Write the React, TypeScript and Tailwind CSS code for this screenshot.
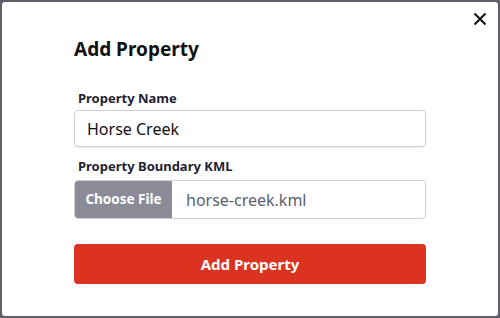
import React from "react";

export default function App() {
  return (
    <div className="w-[500px] h-[318px] bg-[#605f69] p-[2px] font-['Noto_Sans',sans-serif]">
      <div className="relative h-full bg-white rounded-[3px] pl-[72px] pr-[72px] pt-[35px]">
        <button className="absolute top-[9px] right-[10px] w-[16px] h-[16px] flex items-center justify-center">
          <svg width="14" height="14" viewBox="0 0 14 14" fill="none">
            <path d="M1.5 1.5L12.5 12.5M12.5 1.5L1.5 12.5" stroke="#111" strokeWidth="2" />
          </svg>
        </button>

        <h2 className="text-[19px] leading-[24px] font-bold text-[#111]">Add Property</h2>

        <label className="block mt-[29px] ml-[4px] text-[13px] leading-[16px] font-bold text-[#1f2233]">
          Property Name
        </label>
        <div className="mt-[4px] h-[37px] rounded-[4px] border border-[#cfcfd9] shadow-[0_1px_2px_rgba(0,0,0,0.08)] flex items-center px-[12px] text-[16px] text-[#111]">
          Horse Creek
        </div>

        <label className="block mt-[11px] ml-[4px] text-[13px] leading-[16px] font-bold text-[#1f2233]">
          Property Boundary KML
        </label>
        <div className="mt-[6px] h-[39px] rounded-[4px] border border-[#cfcfd9] flex overflow-hidden">
          <div className="w-[97px] bg-[#8b8c97] flex items-center justify-center text-[13.5px] font-bold text-white">
            Choose File
          </div>
          <div className="flex items-center pl-[14px] text-[16px] text-[#5b6170]">horse-creek.kml</div>
        </div>

        <button className="mt-[25px] w-full h-[40px] rounded-[4px] bg-[#dc3320] text-white text-[15px] font-bold">
          Add Property
        </button>
      </div>
    </div>
  );
}
